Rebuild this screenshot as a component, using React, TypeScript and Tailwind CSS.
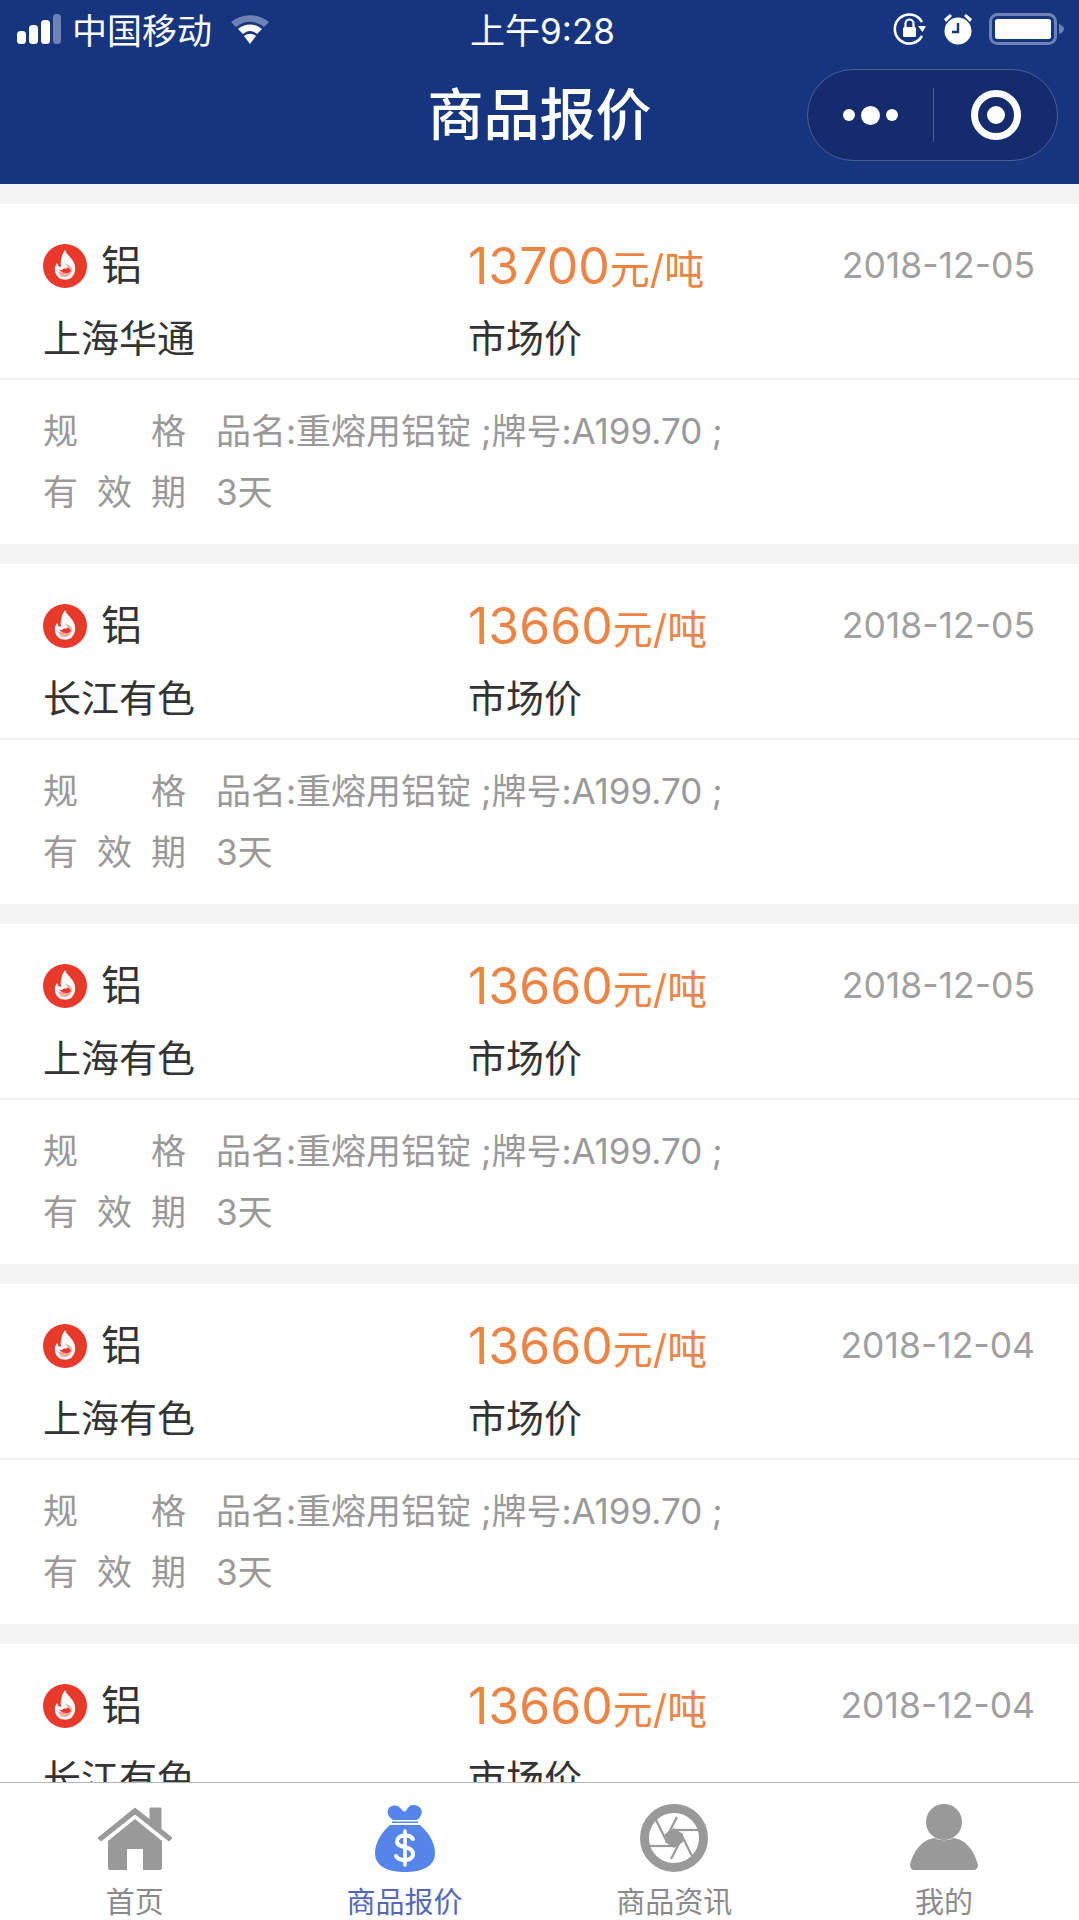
const quotes = [
  { source: '上海华通', price: '13700', date: '2018-12-05' },
  { source: '长江有色', price: '13660', date: '2018-12-05' },
  { source: '上海有色', price: '13660', date: '2018-12-05' },
  { source: '上海有色', price: '13660', date: '2018-12-04' },
  { source: '长江有色', price: '13660', date: '2018-12-04' },
];

function StatusBar() {
  return (
    <div className="h-[55px] px-[17px] grid grid-cols-3 items-center text-white text-[35px]">
      <div className="flex items-center">
        <svg width="45" height="30" viewBox="0 0 45 30">
          <rect x="0" y="17" width="9" height="13" rx="3.5" fill="#fff" />
          <rect x="12" y="11" width="9" height="19" rx="3.5" fill="#fff" />
          <rect x="24" y="6" width="9" height="24" rx="3.5" fill="#fff" />
          <rect x="36" y="0" width="8" height="30" rx="3.5" fill="#6d82b5" />
        </svg>
        <span className="ml-[10px] pt-[5px]">中国移动</span>
        <svg className="ml-[18px]" width="40" height="30" viewBox="0 0 40 30">
          <path d="M1 8 C12 -1 28 -1 39 8 L34 13 C25 6 15 6 6 13 Z" fill="#6d82b5" />
          <path d="M8 15 C15 9 25 9 32 15 L27 20 C22 16 18 16 13 20 Z" fill="#fff" />
          <path d="M14 22 C18 19 22 19 26 22 L20 30 Z" fill="#fff" />
        </svg>
      </div>
      <div className="text-center pl-[6px] pt-[5px]">上午9:28</div>
      <div className="flex items-center justify-end">
        <svg width="34" height="34" viewBox="0 0 34 34" fill="none">
          <path d="M29 24 A14.5 14.5 0 1 1 29 10" stroke="#fff" strokeWidth="2.6" />
          <path d="M25 14 L33 14 L29.5 20 Z" fill="#fff" />
          <rect x="10" y="15" width="13" height="10" rx="1.5" fill="#fff" />
          <path d="M12.5 15 V11.5 A4 4 0 0 1 20.5 11.5 V15" stroke="#fff" strokeWidth="2.2" />
        </svg>
        <svg className="ml-[16px]" width="30" height="32" viewBox="0 0 30 32">
          <circle cx="15" cy="18" r="13.5" fill="#fff" />
          <path d="M15 10 V19 H9" stroke="#17357f" strokeWidth="2.4" fill="none" />
          <path d="M1 6 L7 1 L9 3 L3 9 Z M29 6 L23 1 L21 3 L27 9 Z" fill="#fff" />
        </svg>
        <svg className="ml-[16px] mr-[-3px]" width="76" height="32" viewBox="0 0 76 32">
          <rect x="1.5" y="1.5" width="65" height="29" rx="7" fill="none" stroke="#6d82b5" strokeWidth="3" />
          <rect x="6" y="6" width="56" height="20" rx="2.5" fill="#fff" />
          <path d="M70 11 C73 12 75 14 75 16 C75 18 73 20 70 21 Z" fill="#6d82b5" />
        </svg>
      </div>
    </div>
  );
}

function Capsule() {
  return (
    <div className="w-[251px] h-[92px] rounded-full bg-[#142c6d] border border-[#4a5f99] flex items-center">
      <div className="w-[125px] flex items-center justify-center gap-[6px]">
        <span className="w-[12px] h-[12px] rounded-full bg-white" />
        <span className="w-[19px] h-[19px] rounded-full bg-white" />
        <span className="w-[12px] h-[12px] rounded-full bg-white" />
      </div>
      <div className="w-px h-[54px] bg-[#4a5f99]" />
      <div className="flex-1 flex items-center justify-center">
        <div className="w-[50px] h-[50px] rounded-full border-[7px] border-white flex items-center justify-center">
          <span className="w-[18px] h-[18px] rounded-full bg-white" />
        </div>
      </div>
    </div>
  );
}

function Flame() {
  return (
    <svg width="44" height="44" viewBox="0 0 44 44">
      <circle cx="22" cy="22" r="22" fill="#e8392a" />
      <path
        d="M22 6 C24 11 27 12 30 17 C33 22 33 29 29 33 C26 36.5 18 36.5 15 33 C11 29 11 23 14 19 C15 22 16.5 23 18 23 C17 17 19 10 22 6 Z"
        fill="#fff"
      />
      <path
        d="M22 19 C23 22 27 23 28 27 C26 26 25 27 24 29 C22 27 20 29 17 28 C15 28 14.5 26 14 25 C15 30 18 33 22 33 C26 33 29 30 29 26 C29 22 25 21 22 19 Z"
        fill="#f3a79f"
      />
      <path d="M16 25 C18 27 20 26 21 24 C22 25 24 25 25 23 C26 24 27 25 28 27 C26 30 18 30 16 25 Z" fill="#e8392a" />
    </svg>
  );
}

function SpecRow({ label, children }: { label: string[]; children: React.ReactNode }) {
  return (
    <div className="h-[61px] flex items-center text-[#999999] text-[35px]">
      <div className="w-[143px] flex justify-between">
        {label.map((c) => (
          <span key={c}>{c}</span>
        ))}
      </div>
      <span className="ml-[30px]">{children}</span>
    </div>
  );
}

function QuoteCard({ source, price, date }: { source: string; price: string; date: string }) {
  return (
    <div className="bg-white mb-[20px]">
      <div className="pt-[32px] pb-[10px] pl-[43px] pr-[44px] border-b-2 border-[#f1f1f1] text-[#333333]">
        <div className="h-[60px] flex items-center">
          <div className="w-[425px] flex items-center text-[41px]">
            <Flame />
            <span className="ml-[14px]">铝</span>
          </div>
          <div className="flex-1 flex items-baseline text-[#ec8445]">
            <span className="text-[50px]">{price}</span>
            <span className="text-[40px]">元/吨</span>
          </div>
          <span className="text-[#a0a0a0] text-[35.5px]">{date}</span>
        </div>
        <div className="h-[60px] mt-[12px] flex items-center text-[38px]">
          <span className="w-[425px]">{source}</span>
          <span>市场价</span>
        </div>
      </div>
      <div className="pt-[21px] pb-[21px] px-[43px]">
        <SpecRow label={['规', '格']}>品名:重熔用铝锭 ;牌号:A199.70 ;</SpecRow>
        <SpecRow label={['有', '效', '期']}>3天</SpecRow>
      </div>
    </div>
  );
}

function TabItem({ label, active, children }: { label: string; active?: boolean; children: React.ReactNode }) {
  return (
    <div className="flex flex-col items-center">
      <div className="h-[69px] flex items-center justify-center">{children}</div>
      <span className={`mt-[13px] text-[29px] leading-[36px] ${active ? 'text-[#5468b8]' : 'text-[#8a8a8a]'}`}>{label}</span>
    </div>
  );
}

export default function App() {
  return (
    <div className="h-[1920px] flex flex-col overflow-hidden bg-[#f4f4f4] font-[Inter,'Noto_Sans_CJK_SC',sans-serif]">
      <header className="h-[184px] bg-[#17357f] shrink-0">
        <StatusBar />
        <div className="h-[120px] px-[21px] grid grid-cols-[251px_1fr_251px] items-center">
          <div />
          <h1 className="text-white text-[56px] font-medium text-center">商品报价</h1>
          <Capsule />
        </div>
      </header>

      <main className="flex-1 min-h-0 overflow-hidden pt-[20px]">
        {quotes.map((q, i) => (
          <QuoteCard key={i} {...q} />
        ))}
      </main>

      <nav className="h-[138px] shrink-0 bg-white border-t border-[#b5b5b5] grid grid-cols-4 pt-[20px] overflow-hidden">
        <TabItem label="首页">
          <svg width="78" height="66" viewBox="0 0 78 66">
            <path d="M2 33 L39 3 L54 15 V3 H65 V24 L76 33 L73 36 L39 9 L5 36 Z" fill="#999" stroke="#999" strokeLinejoin="round" />
            <path d="M39 14 L66 36 V63 A2 2 0 0 1 64 65 H47 V44 H31 V65 H14 A2 2 0 0 1 12 63 V36 Z" fill="#999" />
          </svg>
        </TabItem>
        <TabItem label="商品报价" active>
          <svg width="60" height="68" viewBox="0 0 60 68">
            <path d="M18 16 C11 11 11 4 17 2 C21 0.5 25 3 27 6 C28.5 8 30 8 31.5 6 C33.5 2 37 0 41 1.5 C48 3 49 11 42 16 Z" fill="#5585e8" />
            <rect x="17" y="17.5" width="26" height="1.5" fill="#5585e8" />
            <path d="M15 21 H45 C53 28 60 38 60 49 C60 63 46 68 30 68 C14 68 0 63 0 49 C0 38 7 28 15 21 Z" fill="#5585e8" />
            <path d="M38 35 C35 30 22 30 22 37.5 C22 45 38 41 38 50 C38 57.5 24 57.5 21 52" fill="none" stroke="#fff" strokeWidth="4" strokeLinecap="round" />
            <path d="M30 27 V61" stroke="#fff" strokeWidth="3.6" strokeLinecap="round" />
          </svg>
        </TabItem>
        <TabItem label="商品资讯">
          <svg width="68" height="68" viewBox="0 0 68 68">
            <circle cx="34" cy="34" r="29.5" fill="#fff" stroke="#999" strokeWidth="9" />
            <g stroke="#999" strokeWidth="2.2">
              <path d="M15 14 L26 36" />
              <path d="M48 9 L26 34" strokeOpacity="0" />
              <path d="M37 13 L26 34" />
              <path d="M59 26 H34" />
              <path d="M53 54 L42 32" />
              <path d="M31 55 L42 34" />
              <path d="M9 42 H34" />
            </g>
            <path d="M34 24 L43 30 L43 38 L34 44 L25 38 L25 30 Z" fill="#999" />
          </svg>
        </TabItem>
        <TabItem label="我的">
          <svg width="68" height="67" viewBox="0 0 68 67">
            <circle cx="34" cy="18" r="18" fill="#999" />
            <path d="M25 34 C28 37 40 37 43 34 C56 35 65 48 68 61 C68 64 66 66 64 66 H4 C2 66 0 64 0 61 C3 48 12 35 25 34 Z" fill="#999" />
          </svg>
        </TabItem>
      </nav>
    </div>
  );
}
